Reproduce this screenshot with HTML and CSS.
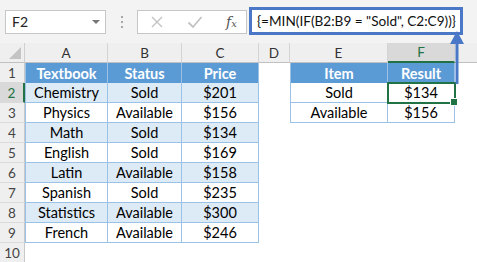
FILE: index.html
```html
<!DOCTYPE html>
<html lang="en">
<head>
    <meta charset="UTF-8">
    <title>MIN IF array formula</title>
    <link rel="stylesheet" href="styles.css">
</head>
<body>

    <div class="toolbar">
        <div class="name-box">
            <span>F2</span>
            <span class="caret"></span>
        </div>
        <div class="grip"><i></i><i></i><i></i></div>
        <div class="fx-buttons">
            <svg class="btn" width="14" height="14" viewBox="0 0 14 14"><path d="M2 2 L12 12 M12 2 L2 12" stroke="#c3c3c3" stroke-width="1.4" fill="none"/></svg>
            <svg class="btn" width="16" height="14" viewBox="0 0 16 14"><path d="M1.5 7.5 L6 12 L14.5 2" stroke="#c3c3c3" stroke-width="1.8" fill="none"/></svg>
            <span class="fx">f<sub>x</sub></span>
        </div>
        <div class="formula">{=MIN(IF(B2:B9 = "Sold", C2:C9))}</div>
    </div>

    <div class="sheet">
        <!-- column headers -->
        <div class="corner"><span class="tri"></span></div>
        <div class="col-head">A</div>
        <div class="col-head">B</div>
        <div class="col-head">C</div>
        <div class="col-head">D</div>
        <div class="col-head">E</div>
        <div class="col-head active">F</div>
        <div class="col-head last"></div>

        <!-- row 1 -->
        <div class="row-head">1</div>
        <div class="cell th first">Textbook</div>
        <div class="cell th">Status</div>
        <div class="cell th">Price</div>
        <div class="cell"></div>
        <div class="cell th first">Item</div>
        <div class="cell th">Result</div>
        <div class="cell"></div>

        <!-- row 2 -->
        <div class="row-head active">2</div>
        <div class="cell td band first">Chemistry</div>
        <div class="cell td band">Sold</div>
        <div class="cell td band">$201</div>
        <div class="cell"></div>
        <div class="cell td first">Sold</div>
        <div class="cell td selected">$134</div>
        <div class="cell"></div>

        <!-- row 3 -->
        <div class="row-head">3</div>
        <div class="cell td first">Physics</div>
        <div class="cell td">Available</div>
        <div class="cell td">$156</div>
        <div class="cell"></div>
        <div class="cell td first">Available</div>
        <div class="cell td">$156</div>
        <div class="cell"></div>

        <!-- row 4 -->
        <div class="row-head">4</div>
        <div class="cell td band first">Math</div>
        <div class="cell td band">Sold</div>
        <div class="cell td band">$134</div>
        <div class="cell"></div>
        <div class="cell"></div>
        <div class="cell"></div>
        <div class="cell"></div>

        <!-- row 5 -->
        <div class="row-head">5</div>
        <div class="cell td first">English</div>
        <div class="cell td">Sold</div>
        <div class="cell td">$169</div>
        <div class="cell"></div>
        <div class="cell"></div>
        <div class="cell"></div>
        <div class="cell"></div>

        <!-- row 6 -->
        <div class="row-head">6</div>
        <div class="cell td band first">Latin</div>
        <div class="cell td band">Available</div>
        <div class="cell td band">$158</div>
        <div class="cell"></div>
        <div class="cell"></div>
        <div class="cell"></div>
        <div class="cell"></div>

        <!-- row 7 -->
        <div class="row-head">7</div>
        <div class="cell td first">Spanish</div>
        <div class="cell td">Sold</div>
        <div class="cell td">$235</div>
        <div class="cell"></div>
        <div class="cell"></div>
        <div class="cell"></div>
        <div class="cell"></div>

        <!-- row 8 -->
        <div class="row-head">8</div>
        <div class="cell td band first">Statistics</div>
        <div class="cell td band">Available</div>
        <div class="cell td band">$300</div>
        <div class="cell"></div>
        <div class="cell"></div>
        <div class="cell"></div>
        <div class="cell"></div>

        <!-- row 9 -->
        <div class="row-head">9</div>
        <div class="cell td first">French</div>
        <div class="cell td">Available</div>
        <div class="cell td">$246</div>
        <div class="cell"></div>
        <div class="cell"></div>
        <div class="cell"></div>
        <div class="cell"></div>

        <!-- row 10 -->
        <div class="row-head">10</div>
        <div class="cell"></div>
        <div class="cell"></div>
        <div class="cell"></div>
        <div class="cell"></div>
        <div class="cell"></div>
        <div class="cell"></div>
        <div class="cell"></div>
    </div>

    <!-- annotation arrow pointing at the formula -->
    <svg class="arrow" width="20" height="60" viewBox="0 0 20 60">
        <path d="M10 12 L10 54" stroke="#4a78c6" stroke-width="3" fill="none"/>
        <path d="M3 14 L10 1 L17 14 Z" fill="#4a78c6"/>
    </svg>

</body>
</html>
```

FILE: styles.css
```css
* {
    box-sizing: border-box;
    margin: 0;
    padding: 0;
}

body {
    width: 477px;
    height: 262px;
    overflow: hidden;
    background-color: #ffffff;
    font-family: Lato, "Open Sans", sans-serif;
    color: #000;
    position: relative;
}

.toolbar {
    display: flex;
    align-items: center;
    height: 43px;
    background-color: #f3f3f3;
    padding-left: 5px;
}

.name-box {
    display: flex;
    align-items: center;
    justify-content: space-between;
    width: 101px;
    height: 24px;
    background-color: #fff;
    border: 1px solid #c6c6c6;
    padding: 0 5px 0 6px;
    font-size: 14px;
    color: #222;
}

.caret {
    width: 0;
    height: 0;
    border-left: 4px solid transparent;
    border-right: 4px solid transparent;
    border-top: 4px solid #777;
}

.grip {
    display: flex;
    flex-direction: column;
    gap: 3px;
    margin: 0 14px 0 15px;
}

.grip i {
    display: block;
    width: 2px;
    height: 2px;
    background-color: #a8a8a8;
}

.fx-buttons {
    display: flex;
    align-items: center;
    width: 110px;
    height: 24px;
    background-color: #fff;
    border: 1px solid #c6c6c6;
    padding-left: 12px;
}

.btn {
    margin-right: 23px;
}

.fx {
    font-family: "DejaVu Serif", serif;
    font-style: italic;
    font-size: 14px;
    color: #555;
}

.fx sub {
    font-size: 10px;
    vertical-align: baseline;
}

.formula {
    display: flex;
    align-items: center;
    width: 214px;
    height: 28px;
    margin-left: 2px;
    margin-top: -1px;
    background-color: #fff;
    border: 3px solid #4a78c6;
    padding-left: 5px;
    font-size: 13.6px;
    white-space: nowrap;
    color: #111;
}

.sheet {
    display: grid;
    grid-template-columns: 25px 83px 74px 77px 31px 98px 67px 1fr;
    grid-template-rows: repeat(11, 20px);
    font-size: 14.5px;
}

.corner {
    background-color: #efefef;
    border-right: 1px solid #d0d0d0;
    border-bottom: 1px solid #c0c0c0;
    position: relative;
}

.tri {
    position: absolute;
    right: 3px;
    bottom: 3px;
    width: 0;
    height: 0;
    border-left: 12px solid transparent;
    border-bottom: 12px solid #c4c4c4;
}

.col-head {
    display: flex;
    align-items: center;
    justify-content: center;
    background-color: #efefef;
    border-right: 1px solid #d4d4d4;
    border-bottom: 1px solid #c0c0c0;
    font-size: 13.5px;
    color: #333;
}

.col-head.active {
    background-color: #d9d9d9;
    border-bottom: 2px solid #217346;
    color: #217346;
}

.col-head.last {
    border-right: none;
}

.row-head {
    display: flex;
    align-items: center;
    justify-content: center;
    background-color: #efefef;
    border-right: 1px solid #c8c8c8;
    border-bottom: 1px solid #dadada;
    font-size: 13.5px;
    color: #444;
}

.row-head.active {
    background-color: #d9d9d9;
    border-right: 2px solid #217346;
    color: #217346;
}

.cell {
    display: flex;
    align-items: center;
    justify-content: center;
    white-space: nowrap;
}

.th {
    background-color: #5b9bd5;
    color: #fff;
    font-weight: bold;
    border-right: 1px solid #9bc2e6;
}

.td {
    border-right: 1px solid #9bc2e6;
    border-bottom: 1px solid #9bc2e6;
}

.first {
    border-left: 1px solid #9bc2e6;
}

.band {
    background-color: #ddebf7;
}

.selected {
    position: relative;
    outline: 2px solid #217346;
    outline-offset: -1px;
}

.selected::after {
    content: "";
    position: absolute;
    right: -4px;
    bottom: -4px;
    width: 6px;
    height: 6px;
    background-color: #217346;
    border: 1px solid #fff;
}

.arrow {
    position: absolute;
    left: 447px;
    top: 30px;
}
```
